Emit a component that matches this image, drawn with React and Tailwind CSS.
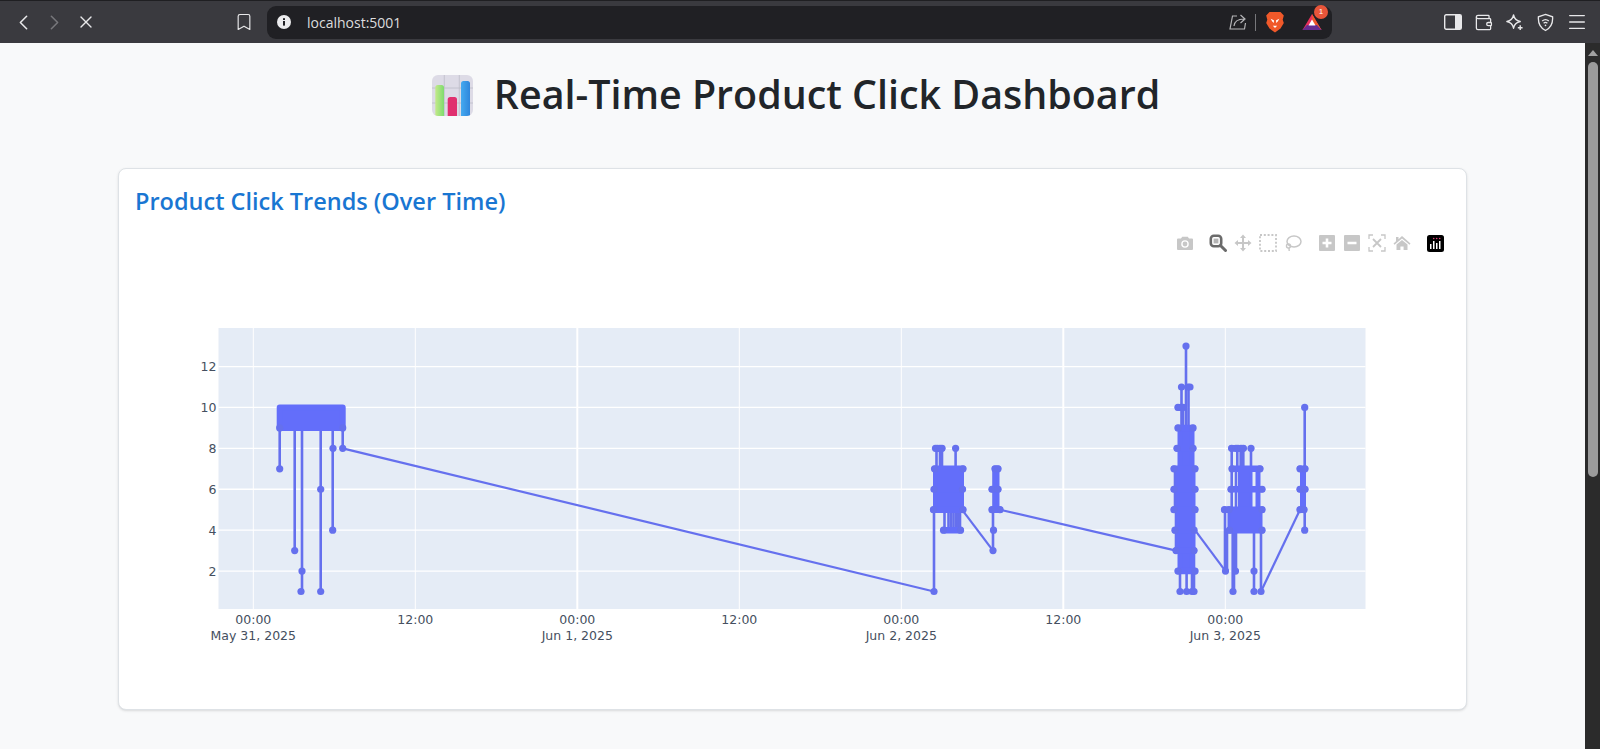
import React from 'react';
import { ChevronLeft, ChevronRight, X, Bookmark, Wallet, Menu } from 'lucide-react';

const BLUE = '#636efa';
const y = v => 591.5 - (v - 1) * 20.45;

const gridX = [253.3, 415.3, 577.3, 739.3, 901.3, 1063.3, 1225.3];
const gridY = [2, 4, 6, 8, 10, 12];
const xTicks = [
  { x: 253.3, t: '00:00', d: 'May 31, 2025' },
  { x: 415.3, t: '12:00' },
  { x: 577.3, t: '00:00', d: 'Jun 1, 2025' },
  { x: 739.3, t: '12:00' },
  { x: 901.3, t: '00:00', d: 'Jun 2, 2025' },
  { x: 1063.3, t: '12:00' },
  { x: 1225.3, t: '00:00', d: 'Jun 3, 2025' },
];

// filled parts where the points are too dense to see single lines: [x1, x2, top, bottom, stroke]
const blocks = [
  [279.7, 342.7, 10, 9, 6],
  [935, 962, 7, 5, 4],
  [994.5, 998, 7, 5, 3],
  [1180, 1192, 9, 2, 5],
  [1177.5, 1193.5, 7, 3, 4],
  [1239.5, 1251, 7, 5, 3],
  [1256.5, 1259.5, 7, 4, 2],
  [1229, 1245.5, 5, 4, 3],
  [1248.5, 1261, 5, 4, 3],
  [1301.5, 1304, 7, 5, 3],
];

// horizontal runs of dots on one value: [x1, x2, value]
const bands = [
  [936, 942, 8], [935, 963, 7], [935, 962.5, 6], [933.5, 963, 5], [944, 960.5, 4],
  [995, 998, 7], [992, 998, 6], [992, 1000, 5],
  [1178, 1183, 10], [1178, 1193, 9], [1177, 1193, 8], [1174, 1195, 7], [1174, 1195, 6], [1174, 1195, 5], [1175, 1194, 4], [1176, 1194, 3], [1178, 1195, 2],
  [1231.5, 1243.5, 8], [1232, 1260, 7], [1231, 1262, 6], [1224.5, 1262, 5], [1229.5, 1262, 4],
  [1300, 1305, 7], [1300, 1305, 6], [1300, 1304, 5],
];

// vertical runs [x, from, to]
const stems = [
  [279.7, 9, 7], [294.7, 9, 3], [302, 9, 1], [320.7, 9, 1], [332.7, 9, 4], [342.7, 9, 8],
  [934, 1, 5], [936.5, 7, 8], [940, 7, 8], [942, 7, 8], [955.6, 7, 8],
  [944.5, 5, 4], [948.5, 5, 4], [951, 5, 4], [953.5, 5, 4], [956, 5, 4], [958, 5, 4], [960, 5, 4],
  [993, 3, 5], [993.5, 5, 7],
  [1186, 13, 3], [1181.5, 11, 9], [1188.5, 11, 9], [1183, 10, 9], [1180, 3, 1], [1186.6, 3, 1], [1192, 3, 1], [1194, 3, 1], [1176, 5, 3], [1175, 7, 5],
  [1225, 2, 5], [1227, 2, 4], [1231.7, 8, 5], [1236, 7, 5], [1237.3, 8, 7], [1240.7, 8, 7], [1243.3, 8, 7], [1251, 8, 7],
  [1232.7, 4, 1], [1234, 4, 1], [1236, 4, 2], [1254, 4, 1], [1261, 4, 1], [1304.7, 4, 10],
];

// single dots per value
const rows = {
  13: [1186],
  11: [1181.5, 1188, 1190],
  10: [1178, 1181, 1183, 1304.7],
  9: [279.7, 342.7, 1178, 1193],
  8: [333, 342.7, 935.5, 937.5, 940, 942, 955.6, 1177, 1193, 1231.7, 1236, 1238, 1241, 1243.3, 1251],
  7: [279.7, 934.5, 963, 995, 998, 1174, 1195, 1232, 1260, 1300, 1305],
  6: [320.7, 934, 962.5, 992, 998, 1174, 1195, 1231, 1262, 1300, 1305],
  5: [933.5, 963, 992, 1000, 1174, 1195, 1224.5, 1229, 1262, 1300, 1304],
  4: [332.7, 943.5, 960.5, 993.5, 1175, 1194, 1229.5, 1262, 1304.7],
  3: [294.7, 993, 1176, 1194],
  2: [302, 1178, 1195, 1225.5, 1235.5, 1254],
  1: [301, 320.7, 934, 1180, 1186.6, 1192, 1194, 1233, 1254, 1261],
};

const links = [
  [342.7, 8, 934, 1],
  [962, 5, 993, 3],
  [1000, 5, 1176, 3],
  [1195, 4, 1225.5, 2],
  [1261, 1, 1300, 5],
];

function Chart() {
  return (
    <svg viewBox="119 265 1347 385" className="block w-[1347px] h-[385px] mt-[13px]">
      <rect x="218.5" y="328" width="1147" height="281" fill="#e5ecf6" />
      {gridX.map((g, i) => (
        <line key={g} x1={g} x2={g} y1="328" y2="609" stroke="#fff" strokeWidth={i === 2 || i === 5 ? 2 : 1} />
      ))}
      {gridY.map(v => (
        <line key={v} x1="218.5" x2="1365.5" y1={y(v)} y2={y(v)} stroke="#fff" strokeWidth="1.3" />
      ))}
      {links.map(([a, b, c, d], i) => (
        <line key={i} x1={a} y1={y(b)} x2={c} y2={y(d)} stroke="#6570ee" strokeWidth="2.2" />
      ))}
      {stems.map(([sx, a, b], i) => (
        <line key={i} x1={sx} x2={sx} y1={y(a)} y2={y(b)} stroke="#6570ee" strokeWidth="2.6" />
      ))}
      {blocks.map(([a, b, c, d, s], i) => (
        <rect key={i} x={a} y={y(c)} width={b - a} height={y(d) - y(c)} fill={BLUE} stroke={BLUE} strokeWidth={s} strokeLinejoin="round" />
      ))}
      {bands.map(([a, b, v], i) => (
        <line key={i} x1={a} x2={b} y1={y(v)} y2={y(v)} stroke={BLUE} strokeWidth="6.5" strokeLinecap="round" />
      ))}
      {Object.entries(rows).map(([v, xs]) =>
        xs.map(cx => <circle key={v + '-' + cx} cx={cx} cy={y(Number(v))} r="3.6" fill="#6570ee" />)
      )}
      <g fontFamily="'DejaVu Sans', sans-serif" fontSize="12.5" fill="#454f60">
        {gridY.map(v => (
          <text key={v} x="218" dx="-1.5" y={y(v) + 4.5} textAnchor="end">{v}</text>
        ))}
        {xTicks.map(k => (
          <g key={k.x} textAnchor="middle">
            <text x={k.x} y="623.5">{k.t}</text>
            {k.d && <text x={k.x} y="639.5">{k.d}</text>}
          </g>
        ))}
      </g>
    </svg>
  );
}

function ModeBar() {
  const off = '#c7c7c7';
  return (
    <div className="flex items-center h-[18px] ml-[1057px]">
      {/* camera */}
      <svg viewBox="0 0 18 18" className="w-[18px] h-[18px]">
        <path d="M1 5.5a1 1 0 0 1 1-1h3l1.2-1.8h5.6L13 4.5h3a1 1 0 0 1 1 1V15a1 1 0 0 1-1 1H2a1 1 0 0 1-1-1z" fill={off} />
        <circle cx="9" cy="10" r="3.8" fill="#fff" />
        <circle cx="9" cy="10" r="2.4" fill={off} />
      </svg>
      {/* zoom, active */}
      <svg viewBox="0 0 18 18" className="w-[18px] h-[18px] ml-[15px]">
        <rect x="1.8" y="1.8" width="10.4" height="10.4" rx="3" fill="#fff" stroke="#6b6b6b" strokeWidth="2.6" />
        <rect x="4.6" y="4.6" width="4.8" height="4.8" fill="#b5b5b5" />
        <line x1="11.5" y1="11.5" x2="16.5" y2="16.5" stroke="#6b6b6b" strokeWidth="3" strokeLinecap="round" />
      </svg>
      {/* pan */}
      <svg viewBox="0 0 18 18" className="w-[18px] h-[18px] ml-[7px]">
        <path d="M9 0.5 12 4H10V8H14V6L17.5 9 14 12V10H10V14H12L9 17.5 6 14H8V10H4V12L0.5 9 4 6V8H8V4H6Z" fill={off} />
      </svg>
      {/* box select */}
      <svg viewBox="0 0 18 18" className="w-[18px] h-[18px] ml-[7px]">
        <rect x="1" y="1" width="16" height="16" fill="none" stroke={off} strokeWidth="1.8" strokeDasharray="2 1.8" />
      </svg>
      {/* lasso */}
      <svg viewBox="0 0 18 18" className="w-[18px] h-[18px] ml-[7px]">
        <ellipse cx="10" cy="7.5" rx="7" ry="5.6" fill="none" stroke={off} strokeWidth="1.5" />
        <circle cx="4.5" cy="12" r="2" fill="none" stroke={off} strokeWidth="1.4" />
        <path d="M5 14 5.2 17" stroke={off} strokeWidth="1.4" fill="none" />
      </svg>
      {/* plus */}
      <svg viewBox="0 0 16 16" className="w-[16px] h-[16px] ml-[17px]">
        <path fillRule="evenodd" d="M1 0h14a1 1 0 0 1 1 1v14a1 1 0 0 1-1 1H1a1 1 0 0 1-1-1V1a1 1 0 0 1 1-1zM6.7 3.5v3.2H3.5v2.6h3.2v3.2h2.6V9.3h3.2V6.7H9.3V3.5z" fill={off} />
      </svg>
      {/* minus */}
      <svg viewBox="0 0 16 16" className="w-[16px] h-[16px] ml-[9px]">
        <path fillRule="evenodd" d="M1 0h14a1 1 0 0 1 1 1v14a1 1 0 0 1-1 1H1a1 1 0 0 1-1-1V1a1 1 0 0 1 1-1zM3.5 6.7v2.6h9V6.7z" fill={off} />
      </svg>
      {/* autoscale */}
      <svg viewBox="0 0 18 18" className="w-[18px] h-[18px] ml-[8px]" fill="none" stroke={off} strokeWidth="1.3">
        <path d="M1 5V1h4M13 1h4v4M17 13v4h-4M5 17H1v-4" />
        <path d="M5 5 13 13M13 5 5 13" strokeWidth="1.8" />
      </svg>
      {/* home */}
      <svg viewBox="0 0 18 18" className="w-[18px] h-[18px] ml-[7px]">
        <path d="M9 2 17.5 9.5 16.5 10.7 9 4.4 1.5 10.7 0.5 9.5 3 7.3V3h2.5v2.2zM3.5 10.6 9 6l5.5 4.6V16H10.6v-3.6H7.4V16H3.5z" fill={off} />
      </svg>
      {/* plotly logo */}
      <svg viewBox="0 0 17 17" className="w-[17px] h-[17px] ml-[16px]">
        <rect width="17" height="17" rx="2.5" fill="#000" />
        <g fill="#fff">
          <rect x="3" y="9" width="1.5" height="5" />
          <rect x="6" y="6" width="1.5" height="8" />
          <rect x="9" y="8" width="1.5" height="6" />
          <rect x="12" y="6" width="1.5" height="8" />
        </g>
        <g fill="#e0457b">
          <circle cx="6.7" cy="3.5" r="0.8" />
          <circle cx="9.7" cy="3.5" r="0.8" />
          <circle cx="12.7" cy="3.5" r="0.8" />
        </g>
      </svg>
    </div>
  );
}

function BarChartEmoji() {
  return (
    <svg viewBox="0 0 41 41" className="w-[41px] h-[41px]">
      <defs>
        <linearGradient id="emojiGreen" x1="0" y1="0" x2="1" y2="0">
          <stop offset="0" stopColor="#c3e98a" />
          <stop offset="1" stopColor="#7fdc6e" />
        </linearGradient>
        <linearGradient id="emojiBlue" x1="0" y1="0" x2="1" y2="0">
          <stop offset="0" stopColor="#45aaf0" />
          <stop offset="1" stopColor="#2f86dc" />
        </linearGradient>
        <clipPath id="emojiClip"><rect width="41" height="41" rx="6" /></clipPath>
      </defs>
      <g clipPath="url(#emojiClip)">
        <rect width="41" height="41" fill="#dddbe6" />
        <path d="M12.3 0v41M27.3 0v41M0 13h41M0 28h41" stroke="#bdbcc8" strokeWidth="0.8" />
        <rect x="3.3" y="10" width="8.7" height="34" rx="2.5" fill="url(#emojiGreen)" />
        <rect x="15.7" y="22" width="9.3" height="22" rx="2.5" fill="#e0306f" />
        <rect x="29" y="6" width="9" height="38" rx="2.5" fill="url(#emojiBlue)" />
      </g>
    </svg>
  );
}

function BrowserBar() {
  return (
    <div className="flex items-center h-[43px] bg-[#3a3a3f] border-t border-[#1f1f22] text-[#e8e8ea] shrink-0">
      <div className="flex items-center w-[267px] pl-[8px]">
        <div className="w-[31px] flex justify-center"><ChevronLeft size={25} strokeWidth={1.5} /></div>
        <div className="w-[31px] flex justify-center text-[#77777b]"><ChevronRight size={25} strokeWidth={1.5} /></div>
        <div className="w-[31px] flex justify-center"><X size={20} strokeWidth={1.6} /></div>
        <div className="ml-[128px] flex justify-center w-[30px]"><Bookmark size={20} strokeWidth={1.4} /></div>
      </div>
      <div className="flex items-center w-[1065px] h-[33px] rounded-[9px] bg-[#202024]">
        <svg viewBox="0 0 14 14" className="w-[14px] h-[14px] ml-[10px]">
          <circle cx="7" cy="7" r="7" fill="#ececee" />
          <rect x="6" y="6" width="2" height="4.6" fill="#202024" />
          <rect x="6" y="3.2" width="2" height="1.8" fill="#202024" />
        </svg>
        <span className="ml-[16px] text-[14px] text-[#dcdcde] font-['Open_Sans',sans-serif]">localhost:5001</span>
        <div className="ml-auto flex items-center">
          <svg viewBox="0 0 18 18" className="w-[18px] h-[18px] text-[#b5b5b8]" fill="none" stroke="currentColor" strokeWidth="1.2">
            <path d="M8 3H3.5L1 16h14.5l1-6" />
            <path d="M5 13C5.5 8 9 6 15 6M11.5 2 16 6l-4.5 4" />
          </svg>
          <div className="w-px h-[17px] bg-[#77777b] ml-[8px]" />
          <svg viewBox="0 0 18 20" className="w-[20px] h-[22px] ml-[9px]">
            <path d="M4 1h10l3 3-1 4 1 3-3 5-5 3.5L4 16l-3-5 1-3-1-4z" fill="#f0592a" />
            <path d="M5 7 8 8.5V11L6.5 9.5zM13 7 10 8.5V11l1.5-1.5zM7 13.5h4L9 15.5z" fill="#fff" />
          </svg>
          <div className="relative ml-[17px] mr-[10px] w-[20px] h-[20px]">
            <svg viewBox="0 0 20 20" className="w-[20px] h-[20px]">
              <path d="M10 2 19.5 18H.5z" fill="#e8305c" />
              <path d="M10 2 15 10.5 19.5 18H11z" fill="#f0592a" />
              <path d="M.5 18 5 13h10l4.5 5z" fill="#662d91" />
              <path d="M10 7.5 13.5 13.5h-7z" fill="#fff" />
            </svg>
            <span className="absolute -top-[7px] -right-[6px] w-[14px] h-[14px] rounded-full bg-[#e8553a] text-white text-[8px] leading-[14px] text-center font-['Liberation_Sans',sans-serif]">1</span>
          </div>
        </div>
      </div>
      <div className="flex items-center ml-[105px]">
        <div className="w-[31px] flex justify-center">
          <svg viewBox="0 0 18 16" className="w-[18px] h-[16px]">
            <rect x="0.7" y="0.7" width="16.6" height="14.6" rx="1.5" fill="none" stroke="currentColor" strokeWidth="1.4" />
            <path d="M11 1h5.5a.7.7 0 0 1 .7.7v12.6a.7.7 0 0 1-.7.7H11z" fill="currentColor" />
          </svg>
        </div>
        <div className="w-[31px] flex justify-center"><Wallet size={19} strokeWidth={1.6} /></div>
        <div className="w-[31px] flex justify-center">
          <svg viewBox="0 0 20 20" className="w-[19px] h-[19px]" fill="none" stroke="currentColor" strokeWidth="1.5">
            <path d="M9 2c.8 4.2 2.8 6.2 7 7-4.2.8-6.2 2.8-7 7-.8-4.2-2.800-6.200-7-7 4.200-.8 6.200-2.800 7-7z" strokeLinejoin="round" />
            <path d="M16 13v5M13.5 15.5h5" />
          </svg>
        </div>
        <div className="w-[31px] flex justify-center">
          <svg viewBox="0 0 18 20" className="w-[17px] h-[19px]" fill="none" stroke="currentColor" strokeWidth="1.4">
            <path d="M9 1.5 16.5 4c.5 6.5-1.5 11.5-7.5 14.500C3 15.500 1 10.500 1.500 4z" />
            <path d="M5.500 8.500c2-1.700 5-1.700 7 0M7 10.700c1.200-1 2.800-1 4 0" />
            <circle cx="9" cy="13" r="0.9" fill="currentColor" stroke="none" />
          </svg>
        </div>
        <div className="w-[31px] flex justify-center"><Menu size={22} strokeWidth={1.4} /></div>
      </div>
    </div>
  );
}

export default function App() {
  return (
    <div className="h-[749px] w-[1600px] overflow-hidden flex flex-col font-['Open_Sans',sans-serif]">
      <BrowserBar />
      <div className="flex flex-1 min-h-0">
        <main className="flex-1 bg-[#f8f9fa] px-[118px]">
          <div className="flex items-center justify-center gap-[21px] h-[125px] pb-[20px] pl-[7px]">
            <BarChartEmoji />
            <h1 className="text-[39.4px] leading-[48px] font-semibold text-[#212529] mb-[4px]">Real-Time Product Click Dashboard</h1>
          </div>
          <div className="bg-white border border-[#dee2e6] rounded-lg shadow-sm h-[542px]">
            <h5 className="text-[23.5px] leading-[29px] font-semibold text-[#1976d2] pl-[16px] pt-[18px]">Product Click Trends (Over Time)</h5>
            <div className="mt-[18px]"><ModeBar /></div>
            <Chart />
          </div>
        </main>
        <aside className="w-[15px] bg-[#2b2b2b] flex flex-col items-center pt-[7px]">
          <div className="w-0 h-0 border-x-[5px] border-x-transparent border-b-[6px] border-b-[#a0a0a0]" />
          <div className="w-[10px] h-[415px] mt-[6px] rounded-full bg-[#9b9b9b]" />
        </aside>
      </div>
    </div>
  );
}
